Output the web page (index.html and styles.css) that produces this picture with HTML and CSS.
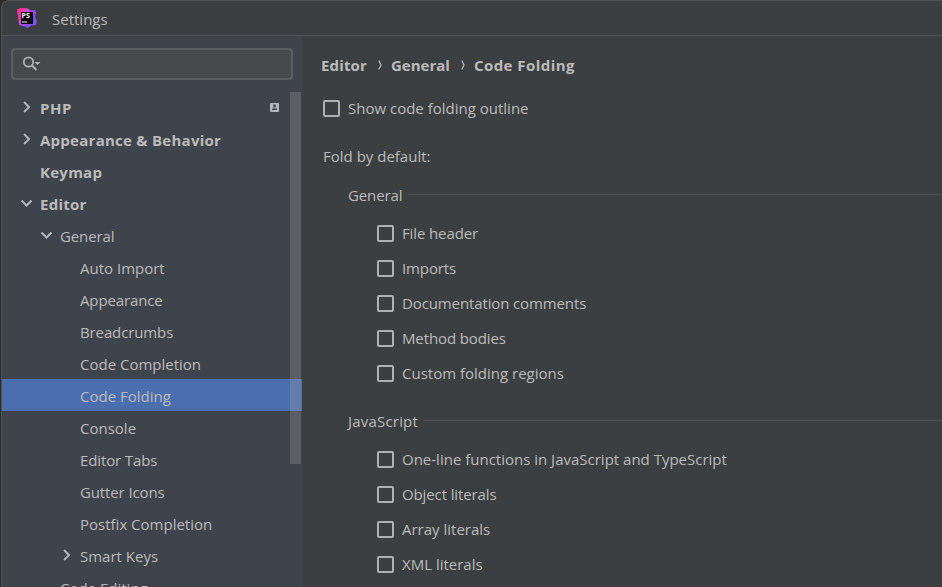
FILE: index.html
```html
<!DOCTYPE html>
<html lang="en">
<head>
<meta charset="utf-8">
<title>Settings</title>
<link rel="stylesheet" href="styles.css">
</head>
<body>
<svg class="defs" aria-hidden="true">
  <symbol id="right" viewBox="0 0 12 12"><path d="M4 1 9 6 4 11" fill="none" stroke="#b4b7b9" stroke-width="2"/></symbol>
  <symbol id="down" viewBox="0 0 12 12"><path d="M1.500 3.500 6.500 8.500 11.500 3.500" fill="none" stroke="#b4b7b9" stroke-width="2"/></symbol>
</svg>
<div class="window">
  <header class="titlebar">
    <svg class="logo" viewBox="0 0 20 20">
      <defs>
        <linearGradient id="lg" x1="0" y1="0" x2="1" y2="0.8"><stop offset="0" stop-color="#ff318c"/><stop offset=".4" stop-color="#d249e8"/><stop offset=".7" stop-color="#8a4dfa"/><stop offset="1" stop-color="#6b57ff"/></linearGradient>
      </defs>
      <path d="M0 2 4 0l7 .5 2 2 5-.5 1 3-1 4 2 4-1 4-5 .5-3 2.500-5-2-4-1L1.500 10z" fill="url(#lg)"/>
      <path d="M0 2 4 0l7 .5L4 5v8l-2-1z" fill="#fb3596"/>
      <rect x="4" y="4" width="12" height="12" fill="#080410"/>
      <rect x="5" y="13.500" width="5" height="1" fill="#fff"/>
      <text class="logo-text" x="4.600" y="10">PS</text>
    </svg>
    <span class="title">Settings</span>
  </header>
  <div class="body">
    <aside class="sidebar">
      <div class="search">
        <svg viewBox="0 0 20 16"><circle cx="6.500" cy="6" r="4.700" fill="none" stroke="#afb1b3" stroke-width="1.800"/><path d="M10 9.500 14.500 14" stroke="#afb1b3" stroke-width="2"/><path d="M12.500 6h6l-3 3z" fill="#afb1b3"/></svg>
      </div>
      <nav class="tree">
        <div class="row bold"><svg class="arrow"><use href="#right"/></svg><span class="wide">PHP</span>
          <svg class="project" viewBox="0 0 9 9"><rect width="9" height="9" rx="1" fill="#adb9c2"/><rect x="3.300" y="1.500" width="2.400" height="3" fill="#3f434c"/><path d="M2 7V5.500h5V7z" fill="#3f434c"/></svg></div>
        <div class="row bold"><svg class="arrow"><use href="#right"/></svg><span>Appearance &amp; Behavior</span></div>
        <div class="row bold"><span class="arrow"></span><span>Keymap</span></div>
        <div class="row bold"><svg class="arrow"><use href="#down"/></svg><span>Editor</span></div>
        <div class="row l2"><svg class="arrow"><use href="#down"/></svg><span class="snug">General</span></div>
        <div class="row l3"><span>Auto Import</span></div>
        <div class="row l3"><span class="snug">Appearance</span></div>
        <div class="row l3"><span class="snug">Breadcrumbs</span></div>
        <div class="row l3"><span>Code Completion</span></div>
        <div class="row l3 selected"><span>Code Folding</span></div>
        <div class="row l3"><span>Console</span></div>
        <div class="row l3"><span class="snug">Editor Tabs</span></div>
        <div class="row l3"><span class="snug">Gutter Icons</span></div>
        <div class="row l3"><span>Postfix Completion</span></div>
        <div class="row l3p"><svg class="arrow"><use href="#right"/></svg><span>Smart Keys</span></div>
        <div class="row l2"><span class="arrow"></span><span>Code Editing</span></div>
        <div class="scrollbar"></div>
      </nav>
    </aside>
    <main class="content">
      <div class="crumbs"><span>Editor</span><svg viewBox="0 0 4 10"><path d="M.8.500 3 5 .8 9.500" fill="none" stroke="#b4b7b9" stroke-width="1.300"/></svg><span class="plain">General</span><svg viewBox="0 0 4 10"><path d="M.8.500 3 5 .8 9.500" fill="none" stroke="#b4b7b9" stroke-width="1.300"/></svg><span class="current">Code Folding</span></div>
      <div class="check outline"><i></i><span>Show code folding outline</span></div>
      <div class="label"><span>Fold by default:</span></div>
      <section>
        <h2><span class="snug">General</span></h2>
        <div class="check"><i></i><span class="snug">File header</span></div>
        <div class="check"><i></i><span class="snug">Imports</span></div>
        <div class="check"><i></i><span class="snug">Documentation comments</span></div>
        <div class="check"><i></i><span class="snug">Method bodies</span></div>
        <div class="check"><i></i><span>Custom folding regions</span></div>
      </section>
      <section>
        <h2><span class="loose">JavaScript</span></h2>
        <div class="check"><i></i><span>One-line functions in JavaScript and TypeScript</span></div>
        <div class="check"><i></i><span class="snug">Object literals</span></div>
        <div class="check"><i></i><span>Array literals</span></div>
        <div class="check"><i></i><span>XML literals</span></div>
      </section>
    </main>
  </div>
</div>
</body>
</html>
```
FILE: styles.css
```css
* { box-sizing: border-box; }
body {
  margin: 0;
  height: 587px;
  overflow: hidden;
  background: #2b2b2b;
  color: #bbbbbb;
  font: 15px/20px "Open Sans", "Noto Sans", sans-serif;
  white-space: nowrap;
}
.defs { position: absolute; width: 0; height: 0; }
.window {
  height: 587px;
  margin-left: 1px;
  border: solid #515354;
  border-width: 1px 0 0 1px;
  border-top-left-radius: 8px;
  background: #3c3f41;
  overflow: hidden;
}
.titlebar {
  display: flex;
  align-items: center;
  height: 35px;
  padding: 0 0 0 15px;
  border-bottom: 1px solid #515354;
}
.logo { width: 20px; height: 20px; margin-right: 15px; }
.logo-text { font: bold 7px "Open Sans", sans-serif; fill: #fff; }
.title { padding-top: 1px; }
.body { display: flex; height: 551px; }
.sidebar { width: 300px; flex: none; background: #3f434c; }
.search {
  width: 282px;
  height: 32px;
  margin: 12px 0 0 9px;
  padding: 7px 0 0 10px;
  border: 2px solid #5c5f61;
  border-radius: 4px;
  background: #45494a;
}
.search svg { display: block; width: 20px; height: 16px; margin-top: -1px; margin-left: -1.500px; }
.tree { position: relative; margin-top: 11px; }
.row { display: flex; align-items: center; height: 32px; padding-left: 18px; }
.row span { padding-top: 2px; }
.arrow { width: 12px; height: 12px; margin-right: 8px; flex: none; }
.bold { font-weight: 700; letter-spacing: 0.26px; }
.bold .wide { letter-spacing: 0.6px; }
.snug { letter-spacing: -0.12px; }
.loose { letter-spacing: 0.2px; }
.l2 { padding-left: 38px; }
.l3 { padding-left: 78px; }
.l3p { padding-left: 58px; }
.selected { background: #4b6eaf; }
.project { width: 9px; height: 9px; margin-left: auto; margin-right: 23px; }
.scrollbar {
  position: absolute;
  top: 1px;
  right: 1px;
  width: 11px;
  height: 372px;
  background: rgba(166, 166, 166, 0.28);
}
.content { flex: 1; padding: 18px 0 0 19px; }
.crumbs { display: flex; align-items: center; height: 22px; font-weight: 700; letter-spacing: 0.15px; }
.crumbs .plain { letter-spacing: 0; }
.crumbs .current { letter-spacing: 0.45px; }
.crumbs svg { width: 4px; height: 10px; margin: 0 9px 0 11px; }
.check { display: flex; align-items: center; height: 35px; }
.check span { margin-top: -2px; }
.check i {
  width: 17px;
  height: 17px;
  margin-right: 8px;
  border: 2px solid #afb1b3;
  border-radius: 2px;
}
.outline { margin: 15px 0 0 2px; }
.label { margin: 20px 0 9px 2px; }
section { padding-left: 56px; margin-bottom: 10px; }
section h2 {
  display: flex;
  align-items: center;
  height: 41px;
  margin: 0 0 0 -29px;
  padding-bottom: 3px;
  font-size: inherit;
  font-weight: 400;
}
section h2 span { padding-top: 2px; }
section h2::after { content: ""; flex: 1; height: 1px; margin-left: 6px; background: #515354; }
```
